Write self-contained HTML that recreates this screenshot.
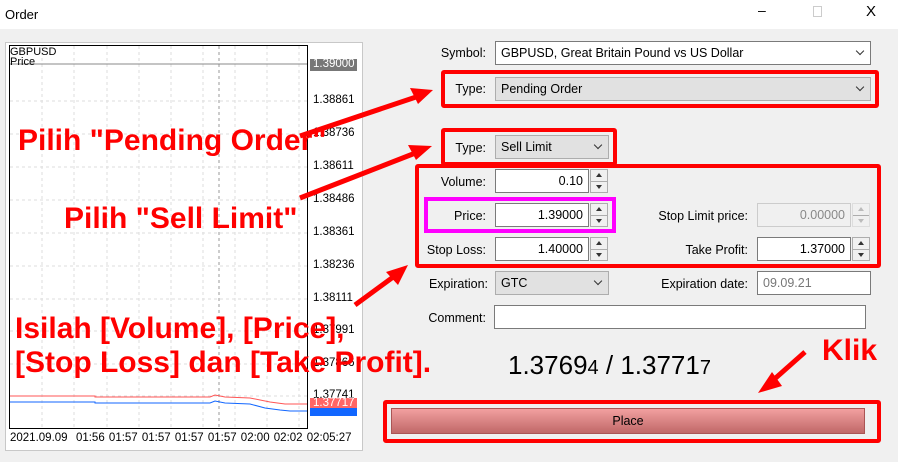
<!DOCTYPE html>
<html><head><meta charset="utf-8"><style>
*{margin:0;padding:0;box-sizing:border-box}
body{width:898px;height:462px;background:#f0f0f0;font-family:"Liberation Sans",sans-serif;font-size:12px;color:#000;position:relative;overflow:hidden}
.abs{position:absolute}
.title{left:0;top:0;width:898px;height:29px;background:#fff}
.lbl{position:absolute;text-align:right;font-size:12.5px}
.inp{position:absolute;background:#fff;border:1px solid #7a7a7a;height:24px;font-size:12.5px;line-height:22px;padding:0 5px}
.sel{background:#e1e1e1;border:1px solid #adadad}
.r{text-align:right}
.spin{position:absolute;width:18px;height:24px;border:1px solid #adadad;background:#f0f0f0}
.spin:after{content:"";position:absolute;left:0;right:0;top:11px;border-top:1px solid #adadad}
.spin i{position:absolute;left:5px;width:0;height:0;border-left:3px solid transparent;border-right:3px solid transparent}
.spin i.u{top:3px;border-bottom:4px solid #333}
.spin i.d{top:15px;border-top:4px solid #333}
.spin.dis i.u{border-bottom-color:#bbb}.spin.dis i.d{border-top-color:#bbb}
.chev{position:absolute;right:7px;top:6px;width:6px;height:6px;border-right:1px solid #333;border-bottom:1px solid #333;transform:rotate(45deg)}
.rb{position:absolute;border:4px solid #f00;border-radius:3px}
.ann{position:absolute;color:#f00;font-weight:bold;font-size:30px;white-space:nowrap;transform-origin:0 0}
.ax{position:absolute;left:313px;font-size:11.5px}
</style></head><body>
<div class="abs title"></div>
<div class="abs" style="left:5px;top:7px;font-size:13px">Order</div>
<div class="abs" style="left:758px;top:2px;font-size:14px">–</div>
<div class="abs" style="left:813px;top:6px;width:9px;height:11px;border:1px solid #ccc"></div>
<div class="abs" style="left:866px;top:3px;font-size:15px">X</div>

<!-- chart -->
<div class="abs" style="left:5px;top:42px;width:358px;height:409px;border:1px solid #c8c8c8;background:#fff"></div>
<svg class="abs" style="left:0;top:0" width="370" height="462">
<g stroke="#ddd" stroke-dasharray="3,3" stroke-width="1">
<line x1="42" y1="46" x2="42" y2="427"/><line x1="74" y1="46" x2="74" y2="427"/><line x1="107" y1="46" x2="107" y2="427"/><line x1="139" y1="46" x2="139" y2="427"/><line x1="171" y1="46" x2="171" y2="427"/><line x1="203" y1="46" x2="203" y2="427"/><line x1="235" y1="46" x2="235" y2="427"/><line x1="267" y1="46" x2="267" y2="427"/><line x1="299" y1="46" x2="299" y2="427"/>
<line x1="10" y1="101" x2="307" y2="101"/><line x1="10" y1="134" x2="307" y2="134"/><line x1="10" y1="167" x2="307" y2="167"/><line x1="10" y1="200" x2="307" y2="200"/><line x1="10" y1="233" x2="307" y2="233"/><line x1="10" y1="266" x2="307" y2="266"/><line x1="10" y1="299" x2="307" y2="299"/><line x1="10" y1="331" x2="307" y2="331"/><line x1="10" y1="364" x2="307" y2="364"/><line x1="10" y1="396" x2="307" y2="396"/>
</g>
<line x1="219" y1="46" x2="219" y2="427" stroke="#999" stroke-dasharray="3,3"/>
<line x1="10" y1="64" x2="307" y2="64" stroke="#888"/>
<rect x="9.5" y="45.5" width="298" height="383" fill="none" stroke="#000"/>
<polyline fill="none" stroke="#f55" points="10,396 95,396 95,397 210,397 215,395 225,397 250,398 270,402 285,404 307,404"/>
<polyline fill="none" stroke="#16f" points="10,402 95,402 95,403 210,403 215,401 225,403 250,404 265,408 280,410 290,411 307,411"/>
<rect x="310" y="59" width="47" height="12" fill="#777"/>
<rect x="310" y="398" width="47" height="12" fill="#f66"/>
<rect x="310" y="408" width="47" height="8" fill="#16f"/>
</svg>
<div class="abs" style="left:10px;top:47px;font-size:11px;line-height:10px">GBPUSD<br>Price</div>
<div class="ax" style="top:58px;color:#fff">1.39000</div>
<div class="ax" style="top:94px">1.38861</div>
<div class="ax" style="top:127px">1.38736</div>
<div class="ax" style="top:160px">1.38611</div>
<div class="ax" style="top:193px">1.38486</div>
<div class="ax" style="top:226px">1.38361</div>
<div class="ax" style="top:259px">1.38236</div>
<div class="ax" style="top:292px">1.38111</div>
<div class="ax" style="top:324px">1.37991</div>
<div class="ax" style="top:357px">1.37866</div>
<div class="ax" style="top:389px">1.37741</div>
<div class="ax" style="top:397px;color:#fff">1.37717</div>
<div class="abs" style="left:10px;top:432px;font-size:11.5px;word-spacing:1px">2021.09.09 &nbsp;01:56 01:57 01:57 01:57 01:57 02:00 02:02 02:05:27</div>

<!-- form -->
<div class="lbl" style="left:400px;width:86px;top:46px">Symbol:</div>
<div class="inp" style="left:495px;top:41px;width:376px">GBPUSD, Great Britain Pound vs US Dollar<span class="chev"></span></div>
<div class="lbl" style="left:400px;width:86px;top:82px">Type:</div>
<div class="inp sel" style="left:495px;top:77px;width:376px">Pending Order<span class="chev"></span></div>
<div class="lbl" style="left:400px;width:86px;top:141px">Type:</div>
<div class="inp sel" style="left:495px;top:135px;width:114px">Sell Limit<span class="chev"></span></div>

<div class="lbl" style="left:400px;width:86px;top:175px">Volume:</div>
<div class="inp r" style="left:495px;top:169px;width:94px">0.10</div><div class="spin" style="left:590px;top:169px"><i class="u"></i><i class="d"></i></div>
<div class="lbl" style="left:400px;width:86px;top:209px">Price:</div>
<div class="inp r" style="left:495px;top:203px;width:94px">1.39000</div><div class="spin" style="left:590px;top:203px"><i class="u"></i><i class="d"></i></div>
<div class="lbl" style="left:400px;width:86px;top:243px">Stop Loss:</div>
<div class="inp r" style="left:495px;top:237px;width:94px">1.40000</div><div class="spin" style="left:590px;top:237px"><i class="u"></i><i class="d"></i></div>
<div class="lbl" style="left:620px;width:128px;top:209px">Stop Limit price:</div>
<div class="inp r" style="left:757px;top:203px;width:94px;background:#f0f0f0;border-color:#ccc;color:#888">0.00000</div><div class="spin dis" style="left:852px;top:203px;border-color:#ddd"><i class="u"></i><i class="d"></i></div>
<div class="lbl" style="left:620px;width:128px;top:243px">Take Profit:</div>
<div class="inp r" style="left:757px;top:237px;width:94px">1.37000</div><div class="spin" style="left:852px;top:237px"><i class="u"></i><i class="d"></i></div>
<div class="lbl" style="left:400px;width:88px;top:277px">Expiration:</div>
<div class="inp sel" style="left:495px;top:271px;width:114px">GTC<span class="chev"></span></div>
<div class="lbl" style="left:620px;width:128px;top:277px">Expiration date:</div>
<div class="inp" style="left:757px;top:271px;width:114px;color:#777">09.09.21</div>
<div class="lbl" style="left:400px;width:86px;top:311px">Comment:</div>
<div class="inp" style="left:494px;top:305px;width:372px"></div>
<div class="abs" style="left:508px;top:350px;font-size:26px">1.3769<span style="font-size:20px">4</span> / 1.3771<span style="font-size:20px">7</span></div>
<div class="abs" style="left:391px;top:408px;width:474px;height:26px;border:1px solid #a55;background:linear-gradient(#f2a0a0,#c06868);text-align:center;line-height:24px;font-size:12.5px">Place</div>

<!-- red boxes -->
<div class="rb" style="left:441px;top:70px;width:438px;height:38px"></div>
<div class="rb" style="left:441px;top:128px;width:176px;height:38px"></div>
<div class="rb" style="left:415px;top:164px;width:466px;height:104px"></div>
<div class="abs" style="left:424px;top:197px;width:192px;height:36px;border:4px solid #f0f"></div>
<div class="rb" style="left:383px;top:400px;width:498px;height:43px"></div>

<!-- arrows -->
<svg class="abs" style="left:0;top:0" width="898" height="462">
<g stroke="#f00" stroke-width="5" fill="#f00">
<line x1="300" y1="136" x2="425" y2="94"/><polygon points="433,90 410,88 418,104" stroke="none"/>
<line x1="300" y1="198" x2="418" y2="152"/><polygon points="432,146 408,145 416,160" stroke="none"/>
<line x1="355" y1="305" x2="400" y2="272"/><polygon points="408,265 386,272 398,285" stroke="none"/>
<line x1="805" y1="352" x2="770" y2="383"/><polygon points="758,393 772,372 782,386" stroke="none"/>
</g></svg>

<div class="ann" style="left:18px;top:124px">Pilih "Pending Order"</div>
<div class="ann" style="left:64px;top:202px">Pilih "Sell Limit"</div>
<div class="ann" style="left:15px;top:312px">Isilah [Volume], [Price],</div>
<div class="ann" style="left:15px;top:346px">[Stop Loss] dan [Take Profit].</div>
<div class="ann" style="left:822px;top:334px">Klik</div>
</body></html>
